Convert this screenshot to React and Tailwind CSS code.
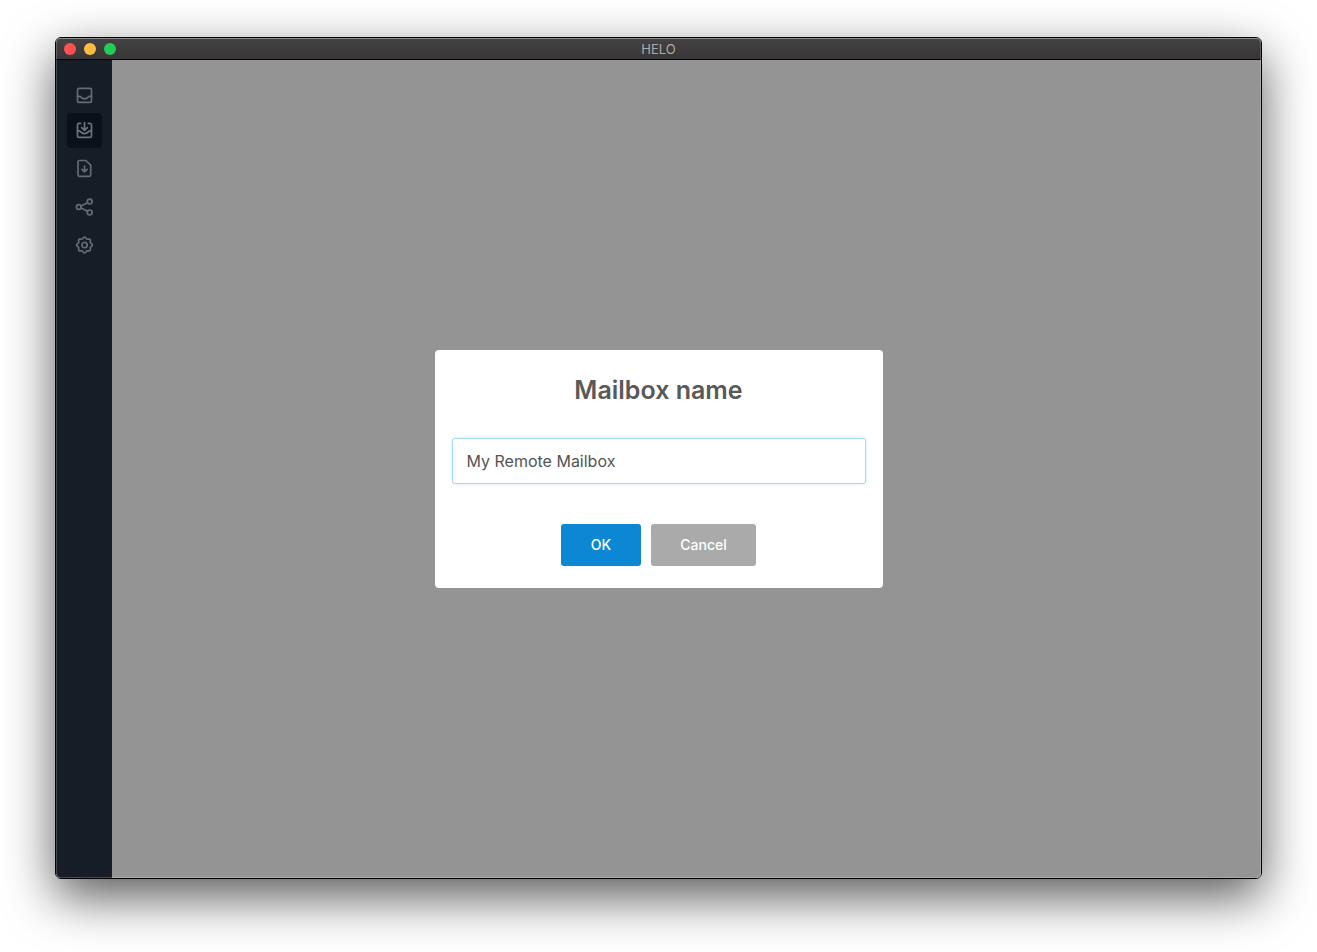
import { useState } from "react";

const stroke = {
  viewBox: "0 0 19 19",
  fill: "none",
  stroke: "currentColor",
  strokeWidth: 1.7,
  strokeLinecap: "round",
  strokeLinejoin: "round",
  "aria-hidden": true,
};

function InboxIcon() {
  return (
    <svg {...stroke} className="size-[19px]">
      <rect x="2.500" y="2.400" width="14" height="14" rx="1.500" />
      <path d="M2.500 10.300h2.200c.7 0 1 .5 1.500 1.100.8.9 1.900 1.400 3.300 1.400s2.500-.5 3.300-1.400c.5-.6.8-1.100 1.500-1.100h2.200" />
    </svg>
  );
}

function InboxDownIcon() {
  return (
    <svg {...stroke} className="size-[19px]">
      <path d="M5.600 2.400H4a1.500 1.500 0 0 0-1.500 1.500v11A1.500 1.500 0 0 0 4 16.400h11a1.500 1.500 0 0 0 1.500-1.500v-11A1.500 1.500 0 0 0 15 2.400h-1.600" />
      <path d="M2.500 9.800h1.600c.7 0 1.100.5 1.600 1.100.9 1.100 2.200 1.800 3.800 1.800s2.900-.7 3.800-1.800c.5-.6.9-1.100 1.600-1.100h1.600" />
      <path d="M9.500 1.700v7.300M6.600 6.700l2.900 2.700 2.900-2.700" />
    </svg>
  );
}

function FileDownIcon() {
  return (
    <svg {...stroke} className="size-[19px]">
      <path d="M4.500 1.500h6.300l4.900 4.700v9.600a1.500 1.500 0 0 1-1.500 1.500H4.500A1.500 1.500 0 0 1 3 15.800V3a1.500 1.500 0 0 1 1.500-1.500Z" />
      <path d="M9.500 7.200v5.600M6.900 10.400l2.600 2.500 2.600-2.500" />
    </svg>
  );
}

function ShareIcon() {
  return (
    <svg {...stroke} className="size-[19px]">
      <circle cx="3.800" cy="10" r="2.400" />
      <circle cx="14.700" cy="4.600" r="2.400" />
      <circle cx="14.700" cy="15.400" r="2.400" />
      <path d="m6 8.900 6.500-3.200M6 11.100l6.500 3.200" />
    </svg>
  );
}

// Outline with eight rounded teeth, sampled around the centre.
const gearPoints = Array.from({ length: 96 }, (_, i) => {
  const angle = (i / 96) * Math.PI * 2;
  const radius = 7.1 + 0.75 * Math.cos(8 * angle);
  const x = 9.5 + radius * Math.sin(angle);
  const y = 10 - radius * Math.cos(angle);
  return `${x.toFixed(2)},${y.toFixed(2)}`;
}).join(" ");

function GearIcon() {
  return (
    <svg {...stroke} className="size-[19px]">
      <polygon points={gearPoints} />
      <circle cx="9.500" cy="10" r="2.700" />
    </svg>
  );
}

const sections = [
  { label: "Inbox", Icon: InboxIcon },
  { label: "Mailboxes", Icon: InboxDownIcon, active: true },
  { label: "Import file", Icon: FileDownIcon },
  { label: "Share", Icon: ShareIcon },
  { label: "Settings", Icon: GearIcon },
];

function TitleBar() {
  return (
    <header className="relative flex h-[22px] items-center justify-center border-t border-b border-t-[#6f6d6e] border-b-black bg-linear-to-b from-[#434142] to-[#383637]">
      <div className="absolute left-2 flex gap-2">
        <button type="button" aria-label="Close" className="size-3 rounded-full bg-[#ff5052]" />
        <button type="button" aria-label="Minimize" className="size-3 rounded-full bg-[#fdbc40]" />
        <button type="button" aria-label="Zoom" className="size-3 rounded-full bg-[#22cc55]" />
      </div>
      <h1 className="text-[13px] leading-5 text-[#adabac]">HELO</h1>
    </header>
  );
}

function Sidebar() {
  return (
    <nav className="w-14 shrink-0 bg-[#161d26] pt-[18px] pl-[11px]">
      {sections.map(({ label, Icon, active }) => (
        <button
          key={label}
          type="button"
          aria-label={label}
          className={
            active
              ? "mb-[3px] flex size-[35px] items-center justify-center rounded bg-[#0b111a] text-[#6d737c]"
              : "mb-[3px] flex size-[35px] items-center justify-center rounded text-[#656b74] first:mb-0"
          }
        >
          <Icon />
        </button>
      ))}
    </nav>
  );
}

function NameDialog() {
  const [name, setName] = useState("My Remote Mailbox");
  return (
    <div className="absolute inset-0 grid place-items-center">
      <form
        role="dialog"
        aria-labelledby="dialog-title"
        onSubmit={(e) => e.preventDefault()}
        className="w-full max-w-[448px] rounded bg-white px-[17px] pt-6 pb-[22px]"
      >
        <label
          id="dialog-title"
          htmlFor="mailbox-name"
          className="block text-center text-[25px] leading-8 font-semibold text-[#595959]"
        >
          Mailbox name
        </label>
        <input
          id="mailbox-name"
          type="text"
          value={name}
          onChange={(e) => setName(e.target.value)}
          className="mt-8 block h-[46px] w-full rounded-[3px] border border-[#a5daef] px-[14px] text-base text-[#545454] shadow-[0_0_3px_#c4e6f5] outline-none"
        />
        <div className="mt-10 flex justify-center gap-[10px]">
          <button type="submit" className="h-[42px] w-20 rounded-[3px] bg-[#0b87d4] text-sm font-medium text-white">
            OK
          </button>
          <button type="button" className="h-[42px] w-[105px] rounded-[3px] bg-[#aaaaaa] text-sm font-medium text-white">
            Cancel
          </button>
        </div>
      </form>
    </div>
  );
}

export default function App() {
  return (
    <div className="flex min-h-screen flex-col overflow-hidden bg-white px-[55px] pt-[37px] pb-[73px] font-['Inter',sans-serif]">
      <div className="flex flex-1 flex-col rounded-md border border-black shadow-[0_18px_50px_rgba(0,0,0,0.65)]">
        <div className="relative flex flex-1 flex-col overflow-hidden rounded-[5px]">
          <TitleBar />
          <div className="relative flex flex-1">
            <Sidebar />
            <main className="flex-1 bg-[#949494]" />
            <NameDialog />
          </div>
          <div className="pointer-events-none absolute inset-0 rounded-[5px] border border-white/20" />
        </div>
      </div>
    </div>
  );
}
